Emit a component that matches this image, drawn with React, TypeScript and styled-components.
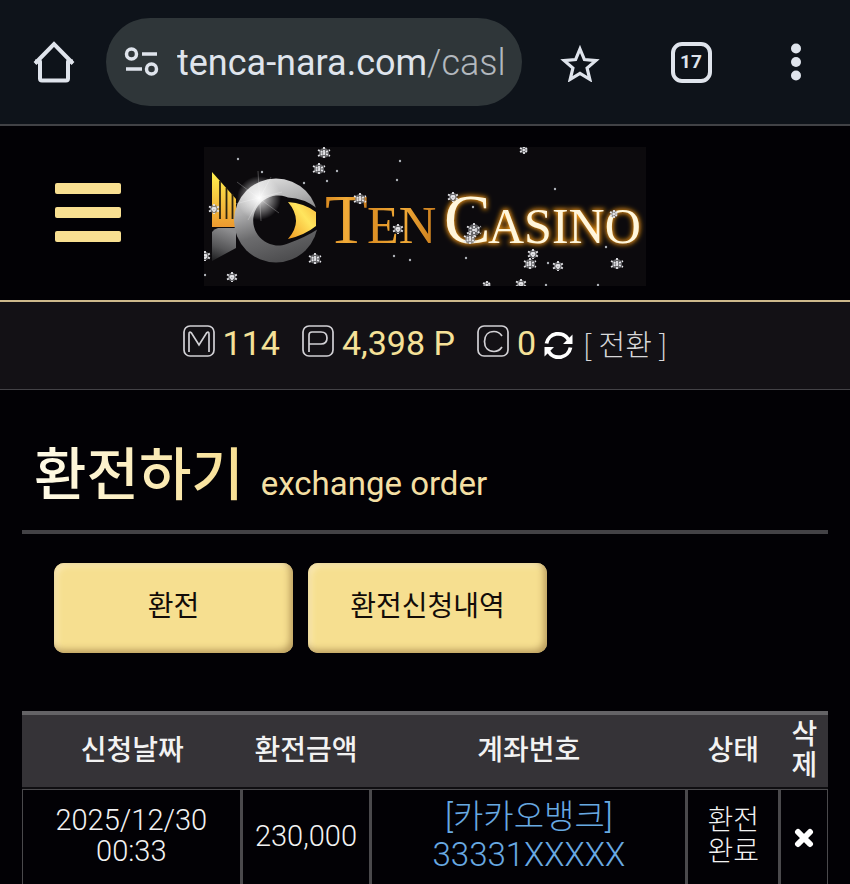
import React from 'react';
import styled, { createGlobalStyle } from 'styled-components';

const GlobalStyle = createGlobalStyle`
  * { box-sizing: border-box; }
  body { margin: 0; background: #020105; color: #f2f2f2; font-family: Roboto, "Noto Sans CJK KR", sans-serif; }
  button { font: inherit; color: inherit; background: none; border: 0; padding: 0; cursor: pointer; }
  svg { display: block; }
`;

const BrowserBar = styled.header`
  display: flex;
  align-items: center;
  height: 126px;
  padding: 0 30px 0 24px;
  background: #0e131a;
  border-bottom: 2px solid #414246;
`;

const IconButton = styled.button<{ $width?: number }>`
  display: flex;
  flex: none;
  justify-content: center;
  align-items: center;
  width: ${(p) => p.$width ?? 60}px;
  height: 60px;
`;

const AddressPill = styled.div`
  display: flex;
  align-items: center;
  flex: 1 1 auto;
  min-width: 0;
  height: 88px;
  margin: 0 28px 0 22px;
  padding: 0 8px 0 18px;
  gap: 17px;
  border-radius: 44px;
  background: #2f3639;
`;

const Address = styled.div`
  flex: 1;
  min-width: 0;
  padding-top: 2px;
  overflow: hidden;
  white-space: nowrap;
  font: 400 36px/48px Roboto, sans-serif;
  color: #dfe4ec;
  span { color: #b3b8be; font-weight: 300; }
`;

const BarActions = styled.div`
  display: flex;
  gap: 51px;
`;

const SiteHeader = styled.div`
  display: flex;
  align-items: center;
  justify-content: center;
  height: 174px;
`;

const MenuButton = styled.button`
  display: flex;
  flex-direction: column;
  gap: 13px;
  width: 66px;
`;

const MenuLine = styled.span`
  height: 11px;
  width: 100%;
  border-radius: 2px;
  background: #f8df91;
`;

const Side = styled.div`
  flex: 1;
  padding: 0 0 2px 55px;
`;

const LogoLink = styled.a`
  display: block;
  flex: none;
  width: 442px;
  margin-top: 6px;
`;

const Balance = styled.div`
  display: flex;
  align-items: center;
  justify-content: center;
  height: 90px;
  padding-bottom: 6px;
  border-top: 2px solid #cdb98b;
  border-bottom: 1px solid #434246;
  background: #131115;
  white-space: nowrap;
`;

const LetterBadge = styled.span`
  margin-bottom: 4px;
`;

const Amount = styled.span<{ $gap?: number }>`
  margin: 0 ${(p) => p.$gap ?? 0}px 0 8px;
  font-size: 34px;
  line-height: 40px;
  color: #f5e198;
`;

const Convert = styled.button`
  display: flex;
  align-items: center;
  gap: 10px;
  font: 300 29px/40px "Noto Sans CJK KR", sans-serif;
  color: #d8d8da;
  svg { margin-top: 6px; }
`;

const Main = styled.main`
  padding: 40px 22px 0;
`;

const Title = styled.h1`
  display: flex;
  align-items: baseline;
  gap: 17px;
  margin: 0;
  padding: 0 12px;
  height: 104px;
  border-bottom: 4px solid #434246;
  font: 500 57px/92px Roboto, "Noto Sans CJK KR", sans-serif;
`;

const TitleText = styled.span`
  background: linear-gradient(90deg, #fffbe9, #f8df91);
  background-clip: text;
  color: transparent;
`;

const Subtitle = styled.small`
  font-size: 33px;
  font-weight: 400;
  color: #f3dfa3;
`;

const Tabs = styled.nav`
  display: flex;
  gap: 15px;
  padding: 29px 32px 58px;
`;

const TabButton = styled.button`
  width: 239px;
  height: 90px;
  padding-bottom: 2px;
  border-radius: 10px;
  background: #f6df90;
  box-shadow: inset -3px -3px 7px #b89b5c, inset 3px 3px 6px #fbebb8;
  color: #120c08;
  font-size: 28px;
  line-height: 40px;
`;

const Table = styled.table`
  width: 100%;
  table-layout: fixed;
  border-collapse: separate;
  border-spacing: 0;
  border-top: 4px solid #646366;
  text-align: center;
`;

const HeadCell = styled.th<{ $width: string }>`
  width: ${(p) => p.$width};
  height: 74px;
  padding: 0 0 2px 3px;
  border-bottom: 2px solid #0f0e11;
  background: #353337;
  font-size: 28px;
  line-height: 31px;
  font-weight: 500;
  word-break: break-all;
`;

const Cell = styled.td<{ $size?: number }>`
  height: 95px;
  padding: 0 0 2px;
  border-top: 1px solid #4a494c;
  border-left: 3px solid #4a494c;
  font-size: ${(p) => p.$size ?? 28}px;
  line-height: 31px;
  font-weight: 300;
  &:first-child { border-left-width: 1px; }
  &:last-child { border-right: 1px solid #4a494c; }
`;

const AccountLink = styled.a`
  display: block;
  color: #68a9e2;
  font-size: 33px;
  line-height: 38px;
  text-decoration: none;
`;

const RemoveButton = styled.button`
  display: inline-flex;
  vertical-align: middle;
`;

const ink = '#dfe4ec';

const HomeIcon = () => (
  <svg width="42" height="42" viewBox="0 0 42 42" fill="none" stroke={ink} strokeWidth="4" strokeLinejoin="round">
    <path d="M2 22.500L21 3l19 19.500" strokeLinejoin="miter" />
    <path d="M2 20.500h5v17q0 2 2 2h24q2 0 2-2v-17h5" />
  </svg>
);

const TuneIcon = () => (
  <svg width="36" height="30" viewBox="0 0 36 30" fill="none" stroke={ink} strokeWidth="3.500">
    <circle cx="7.500" cy="7" r="5" />
    <circle cx="27.500" cy="22" r="5" />
    <path d="M18 7h15M2 22h16" />
  </svg>
);

const StarIcon = () => (
  <svg width="40" height="40" viewBox="0 0 40 40" fill="none" stroke={ink} strokeWidth="3.200">
    <path d="M20 7l4.400 10.600 11.400 1-8.700 7.500 2.700 11.200L20 31.300l-9.800 6 2.700-11.200-8.700-7.500 11.400-1z" />
  </svg>
);

const TabCount = styled.span`
  display: grid;
  place-items: center;
  width: 41px;
  height: 41px;
  border: 4px solid ${ink};
  border-radius: 11px;
  color: ${ink};
  font: 700 19px/24px Roboto, sans-serif;
`;

const DotsIcon = () => (
  <svg width="12" height="38" viewBox="0 0 12 38" fill={ink}>
    <circle cx="6" cy="5.500" r="5" />
    <circle cx="6" cy="19" r="5" />
    <circle cx="6" cy="32.500" r="5" />
  </svg>
);

const letterPaths = {
  M: 'M6 27V9q0-3 2.500-1L16 20l7.500-12q2.500-2 2.500 1v18',
  P: 'M7 27V10q0-3 3-3h9q6 0 6 6t-6 6H7',
  C: 'M25 11q-3-4.500-8-4.500c-6 0-9.500 4-9.500 10s3.500 10 9.500 10q5 0 8-4.500',
};

const LetterIcon = ({ letter }: { letter: keyof typeof letterPaths }) => (
  <LetterBadge>
    <svg width="32" height="32" viewBox="0 0 32 32" fill="none" stroke="#d2d1d5" strokeWidth="1.700" role="img" aria-label={letter}>
      <rect x="1" y="1" width="30" height="30" rx="6" />
      <path d={letterPaths[letter]} />
    </svg>
  </LetterBadge>
);

const RefreshIcon = () => (
  <svg width="29" height="29" viewBox="0 0 29 29" fill="none" stroke="#fff" strokeWidth="3.800">
    <path d="M2.500 12.500A12 12 0 0 1 24.500 8.500M26.500 16.500A12 12 0 0 1 4.500 20.500" />
    <path d="M28.500 3.500v9.500H19zM0.500 25.500V16H10z" fill="#fff" stroke="none" />
  </svg>
);

const RemoveIcon = () => (
  <svg width="20" height="20" viewBox="0 0 20 20" stroke="#fff" strokeWidth="6" strokeLinecap="round">
    <path d="M4 4l12 12M16 4L4 16" />
  </svg>
);

const flakes = [
  [120, 6, 6], [115, 22, 6], [111, 112, 6], [28, 130, 5], [10, 62, 5], [1, 109, 5], [156, 52, 6], [194, 82, 5],
  [320, 3, 4], [249, 50, 5], [270, 83, 7], [266, 92, 6], [329, 107, 5], [326, 117, 6], [354, 119, 5], [413, 117, 6],
  [283, 138, 4], [317, 137, 5], [410, 67, 4],
];
const specks = [
  [34, 12], [58, 25], [100, 36], [123, 34], [133, 24], [196, 14], [193, 33], [190, 109], [206, 113], [351, 42],
  [402, 100], [262, 111], [344, 116], [342, 138], [394, 138], [269, 60], [1, 128],
];

const Snow = ({ x, y, r }: { x: number; y: number; r: number }) => (
  <g transform={`translate(${x} ${y})`}>
    <circle r={r * 0.85} fill="#77777b" fillOpacity="0.800" />
    <path d={`M0 ${-r}V${r}M${-r} ${-r / 2}L${r} ${r / 2}M${-r} ${r / 2}L${r} ${-r / 2}`} stroke="#e4e4e8" strokeWidth="1.800" strokeDasharray="2 1" />
  </g>
);

const Logo = () => (
  <svg width="100%" viewBox="0 0 442 139" role="img" aria-label="Ten Casino">
    <defs>
      <linearGradient id="silver" x1="0.200" y1="0" x2="0.500" y2="1">
        <stop offset="0" stopColor="#e4e4e4" />
        <stop offset="0.350" stopColor="#b0b0b1" />
        <stop offset="0.650" stopColor="#6c6c6e" />
        <stop offset="1" stopColor="#4e4e50" />
      </linearGradient>
      <linearGradient id="gold" x1="0" y1="0" x2="0" y2="1">
        <stop offset="0" stopColor="#fff04e" />
        <stop offset="1" stopColor="#ec992f" />
      </linearGradient>
      <linearGradient id="eye" x1="0" y1="1" x2="1" y2="0">
        <stop offset="0" stopColor="#f19a20" />
        <stop offset="0.600" stopColor="#ffe55e" />
        <stop offset="1" stopColor="#f6b83a" />
      </linearGradient>
      <linearGradient id="tail" x1="0.500" y1="0" x2="0.200" y2="1">
        <stop offset="0" stopColor="#8d8d8f" />
        <stop offset="0.600" stopColor="#555557" />
        <stop offset="1" stopColor="#222224" />
      </linearGradient>
      <linearGradient id="ten" x1="0" y1="0" x2="1" y2="0">
        <stop offset="0" stopColor="#d98a20" />
        <stop offset="0.500" stopColor="#f2ab38" />
        <stop offset="1" stopColor="#c97c1c" />
      </linearGradient>
      <radialGradient id="flare">
        <stop offset="0" stopColor="#fff" />
        <stop offset="0.350" stopColor="#fff" stopOpacity="0.600" />
        <stop offset="1" stopColor="#fff" stopOpacity="0" />
      </radialGradient>
      <filter id="glow" x="-10%" y="-30%" width="120%" height="160%">
        <feGaussianBlur stdDeviation="2.500" />
      </filter>
    </defs>
    <rect width="442" height="139" fill="#0c0a0d" />
    <path d="M8 25l24 27v28H8z" fill="url(#gold)" />
    <path d="M16 34v38M22.500 41v31M28.500 47v25" stroke="#2c2410" strokeWidth="1.800" />
    <path d="M8 85q2-3 6-4h18v20L8 114z" fill="url(#tail)" />
    <circle cx="72" cy="73.500" r="42" fill="url(#silver)" />
    <path d="M114 62Q100 51 84 50.500a25 25 0 1 0 0 46Q102 90 114 82z" fill="#0c0a0d" />
    <path d="M84 55q16 1 28 10v14q-11 9-28 13 16-18 0-37z" fill="url(#eye)" />
    <circle cx="55" cy="51" r="22" fill="url(#flare)" />
    <path d="M33 35l42 31M67 30L44 73M54 24l3 50M31 57l47-12" stroke="#fff" strokeOpacity="0.250" />
    <g fontFamily="Liberation Serif, serif">
      <g fill="url(#ten)">
        <text x="121" y="96" fontSize="70">T</text>
        <text x="163" y="96" fontSize="52">EN</text>
      </g>
      <g fill="#fa9c18" stroke="#fa9c18" strokeWidth="2" filter="url(#glow)" aria-hidden="true">
        <text x="240" y="96" fontSize="70">C</text>
        <text x="284" y="96" fontSize="50">ASINO</text>
      </g>
      <g fill="#fff6dc">
        <text x="240" y="96" fontSize="70">C</text>
        <text x="284" y="96" fontSize="50">ASINO</text>
      </g>
    </g>
    {flakes.map(([x, y, r]) => <Snow key={`${x}-${y}`} x={x} y={y} r={r} />)}
    {specks.map(([x, y]) => <circle key={`${x}-${y}`} cx={x} cy={y} r="1.200" fill="#aeb2b8" />)}
  </svg>
);

const columns = [
  { label: '신청날짜', width: '27%' },
  { label: '환전금액', width: '16.1%' },
  { label: '계좌번호', width: '39.2%' },
  { label: '상태', width: '11.5%' },
  { label: '삭제', width: '6.2%' },
];

export default function App() {
  return (
    <>
      <GlobalStyle />
      <BrowserBar>
        <IconButton aria-label="Home"><HomeIcon /></IconButton>
        <AddressPill>
          <TuneIcon />
          <Address>tenca-nara.com<span>/casl</span></Address>
        </AddressPill>
        <BarActions>
          <IconButton aria-label="Bookmark"><StarIcon /></IconButton>
          <IconButton aria-label="Tabs"><TabCount>17</TabCount></IconButton>
          <IconButton $width={48} aria-label="More"><DotsIcon /></IconButton>
        </BarActions>
      </BrowserBar>
      <SiteHeader>
        <Side>
          <MenuButton aria-label="Menu"><MenuLine /><MenuLine /><MenuLine /></MenuButton>
        </Side>
        <LogoLink href="#"><Logo /></LogoLink>
        <Side />
      </SiteHeader>
      <Balance>
        <LetterIcon letter="M" /><Amount $gap={22}>114</Amount>
        <LetterIcon letter="P" /><Amount $gap={22}>4,398 P</Amount>
        <LetterIcon letter="C" /><Amount $gap={8}>0</Amount>
        <Convert><RefreshIcon />[ 전환 ]</Convert>
      </Balance>
      <Main>
        <Title><TitleText>환전하기</TitleText><Subtitle>exchange order</Subtitle></Title>
        <Tabs>
          <TabButton>환전</TabButton>
          <TabButton>환전신청내역</TabButton>
        </Tabs>
        <Table>
          <thead>
            <tr>{columns.map((c) => <HeadCell key={c.label} $width={c.width} scope="col">{c.label}</HeadCell>)}</tr>
          </thead>
          <tbody>
            <tr>
              <Cell $size={29}>2025/12/30<br />00:33</Cell>
              <Cell $size={29}>230,000</Cell>
              <Cell><AccountLink href="#">[카카오뱅크]<br />33331XXXXX</AccountLink></Cell>
              <Cell>환전<br />완료</Cell>
              <Cell><RemoveButton aria-label="삭제"><RemoveIcon /></RemoveButton></Cell>
            </tr>
          </tbody>
        </Table>
      </Main>
    </>
  );
}
